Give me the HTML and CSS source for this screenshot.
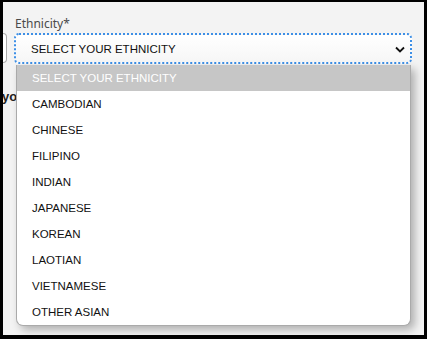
FILE: index.html
```html
<!DOCTYPE html>
<html>
<head>
<meta charset="utf-8">
<link rel="stylesheet" href="styles.css">
</head>
<body>
<div class="frame">
  <div class="content">
    <div class="field-row">
      <div class="prev-field"></div>
      <div class="field">
        <label class="label">Ethnicity*</label>
        <div class="select">
          <span class="select-text">SELECT YOUR ETHNICITY</span>
          <svg class="chev" width="10" height="7" viewBox="0 0 10 7"><path d="M1 1.5 L5 5.5 L9 1.5" fill="none" stroke="#111" stroke-width="1.8"/></svg>
        </div>
      </div>
    </div>
    <div class="section-title">yo</div>
  </div>
  <ul class="list">
    <li class="opt active">SELECT YOUR ETHNICITY</li>
    <li class="opt">CAMBODIAN</li>
    <li class="opt">CHINESE</li>
    <li class="opt">FILIPINO</li>
    <li class="opt">INDIAN</li>
    <li class="opt">JAPANESE</li>
    <li class="opt">KOREAN</li>
    <li class="opt">LAOTIAN</li>
    <li class="opt">VIETNAMESE</li>
    <li class="opt">OTHER ASIAN</li>
  </ul>
</div>
</body>
</html>
```
FILE: styles.css
```css
* { box-sizing: border-box; }
html, body { margin: 0; padding: 0; }
body { width: 427px; height: 339px; overflow: hidden; font-family: "Liberation Sans", Arial, sans-serif; }
.frame {
  position: relative;
  width: 427px;
  height: 339px;
  border-style: solid;
  border-color: #000;
  border-width: 2px 3px 4px 3px;
  background: #f3f3f3;
  overflow: hidden;
}
.content { padding-top: 14px; }
.field-row { display: flex; align-items: flex-end; gap: 7px; }
.prev-field {
  width: 4px;
  height: 30px;
  margin-bottom: 1px;
  background: #fff;
  border: 1px solid #a9a9a9;
  border-left: none;
  border-radius: 0 4px 4px 0;
}
.field { display: flex; flex-direction: column; width: 398px; }
.label {
  font-family: "Noto Sans", sans-serif;
  font-size: 12px;
  color: #4a4a4a;
  line-height: 16px;
  margin-left: 1px;
  margin-bottom: 1px;
}
.select {
  height: 31px;
  border: 2px dotted #3d8fe6;
  border-radius: 5px;
  background: linear-gradient(#fff, #f6f6f6);
  display: flex;
  align-items: center;
  justify-content: space-between;
  padding: 0 5px 0 15px;
}
.select-text { font-size: 11.5px; color: #111; }
.chev { display: block; margin-top: 1px; }
.section-title {
  margin-top: 25px;
  font-weight: bold;
  font-size: 13px;
  color: #222;
  margin-left: -1px;
}
.list {
  position: absolute;
  left: 13px;
  top: 63px;
  width: 395px;
  margin: 0;
  padding: 0;
  list-style: none;
  background: #fff;
  border: 1px solid #aaa;
  border-top: none;
  border-radius: 0 0 7px 7px;
  box-shadow: 4px 4px 8px rgba(0,0,0,0.28);
  overflow: hidden;
}
.opt {
  height: 26px;
  line-height: 26px;
  padding-left: 15px;
  font-size: 11.5px;
  color: #111;
}
.opt.active { background: #c6c6c6; color: #fff; }
```
